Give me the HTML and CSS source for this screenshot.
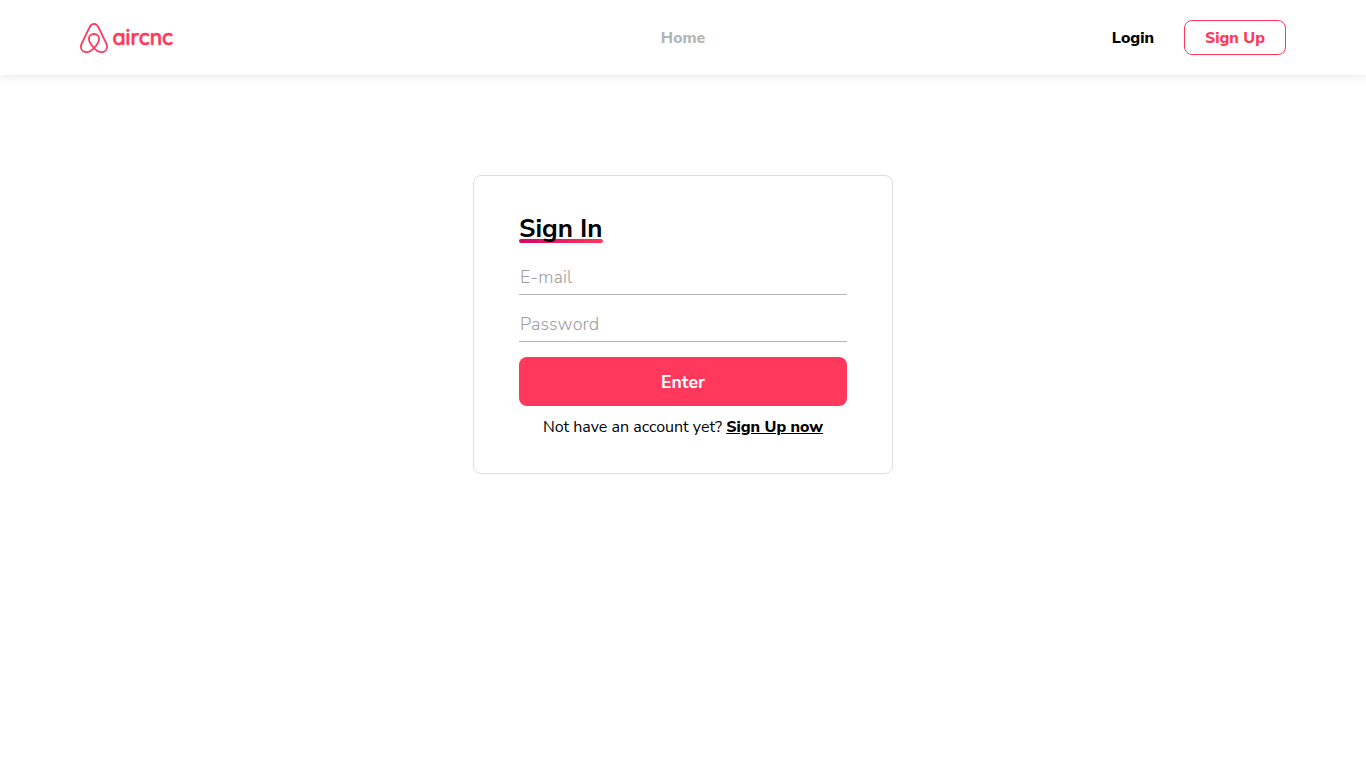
FILE: index.html
```html
<!DOCTYPE html>
<html lang="en">
<head>
<meta charset="utf-8">
<title>aircnc</title>
<link rel="stylesheet" href="styles.css">
</head>
<body>
<header class="header">
  <a class="logo" href="#" aria-label="aircnc">
    <svg width="96" height="32" viewBox="0 0 96 32">
      <path class="logo-mark" d="M14 26.2C10.9 22.6 8.9 19.3 8.9 16.9C8.9 14 11 12 14 12S19.1 14 19.1 16.9C19.1 19.3 17.1 22.6 14 26.2C11.2 29.1 8.9 30.2 6.7 30.2C3.3 30.2 .9 27.8 .9 24.7C.9 23.4 1.3 22.3 2 20.8L9.5 5.4C10.8 2.8 12 1.9 14 1.9S17.2 2.8 18.5 5.4L26 20.8C26.7 22.3 27.1 23.4 27.1 24.7C27.1 27.8 24.7 30.2 21.3 30.2C19.1 30.2 16.8 29.1 14 26.2Z"/>
      <text class="logo-text" x="32.5" y="23" textLength="60.5" lengthAdjust="spacingAndGlyphs">aircnc</text>
    </svg>
  </a>
  <nav class="nav"><a class="home" href="#">Home</a></nav>
  <div class="actions">
    <a class="login" href="#">Login</a>
    <a class="signup" href="#"><span>Sign Up</span></a>
  </div>
</header>
<main class="main">
  <form class="card">
    <h1 class="title">Sign In</h1>
    <input class="field email" type="email" placeholder="E-mail">
    <input class="field password" type="password" placeholder="Password">
    <button class="enter" type="button">Enter</button>
    <p class="note"><span class="question">Not have an account yet?</span><a class="now" href="#">Sign Up now</a></p>
  </form>
</main>
</body>
</html>
```
FILE: styles.css
```css
* { box-sizing: border-box; margin: 0; padding: 0; }
body { background: #fff; color: #000; font: 16px/22px "Nunito Sans", Nunito, "Open Sans", sans-serif; }
a { color: inherit; text-decoration: none; }
.header { display: grid; grid-template-columns: 1fr auto 1fr; align-items: center; height: 75px; padding: 0 80px; box-shadow: 0 0 10px rgba(0,0,0,.12); font-weight: 800; }
.logo { display: flex; }
.logo svg { overflow: visible; }
.logo-mark { fill: none; stroke: #ff385c; stroke-width: 1.8; stroke-linejoin: round; }
.logo-text { font: 600 22px Quicksand, Poppins, Lato, sans-serif; fill: #ff385c; stroke: #ff385c; stroke-width: .6; }
.home { color: #b5b5b5; font-size: 15.8px; }
.actions { display: flex; justify-content: flex-end; align-items: center; gap: 30px; }
.signup { display: flex; align-items: center; justify-content: center; width: 102px; height: 35px; border: 1px solid #ff385c; border-radius: 8px; color: #ff385c; }
.main { display: flex; justify-content: center; padding-top: 100px; }
.card { display: flex; flex-direction: column; width: 420px; height: 299px; padding: 35px 45px; border: 1px solid #ddd; border-radius: 8px; }
.title { position: relative; z-index: 0; align-self: flex-start; height: 32px; font-size: 26px; line-height: 35px; font-weight: 700; white-space: nowrap; }
.title::after { content: ""; position: absolute; z-index: -1; left: 0; bottom: 0; width: 100%; height: 4px; border-radius: 2px; background: linear-gradient(90deg, #d70466, #ff385c); }
.field { width: 100%; height: 37px; border: 0; border-bottom: 1px solid #b5b5b5; padding: 2px 1px 0; background: transparent; font: 300 18px "Nunito Sans", Nunito, "Open Sans", sans-serif; letter-spacing: .1px; outline: 0; }
.field::placeholder { color: #a0a0a0; opacity: 1; }
.email { margin-top: 15px; }
.password { margin-top: 10px; }
.enter { height: 49px; margin-top: 15px; border: 0; border-radius: 8px; background: #ff385c; color: #fff; font: 700 17.6px "Nunito Sans", Nunito, "Open Sans", sans-serif; }
.note { display: flex; justify-content: center; gap: 4px; margin-top: 10px; white-space: nowrap; }
.now { font-weight: 800; text-decoration: underline; }
```
